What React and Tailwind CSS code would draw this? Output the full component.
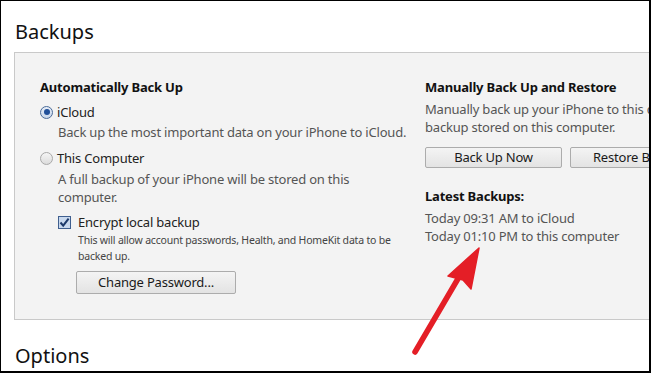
import React from "react";

const font = { fontFamily: '"Noto Sans", "Open Sans", sans-serif' };

function Radio({ checked }) {
  return (
    <span
      className={
        "inline-flex items-center justify-center w-[13px] h-[13px] rounded-full border shrink-0 " +
        (checked
          ? "border-[#4a6b99] bg-gradient-to-b from-[#e8eef7] to-[#c7d6ea]"
          : "border-[#a9a9a9] bg-gradient-to-b from-[#f5f5f5] to-[#dcdcdc]")
      }
    >
      {checked && <span className="w-[6px] h-[6px] rounded-full bg-[#1f4f99]" />}
    </span>
  );
}

function Checkbox() {
  return (
    <span className="inline-flex items-center justify-center w-[13px] h-[13px] border border-[#3f5f8f] bg-[#c9d9ee] shrink-0">
      <svg width="11" height="11" viewBox="0 0 11 11">
        <path d="M1.5 5.5 L4.2 8.6 L9.6 1.6" fill="none" stroke="#1d3a6b" strokeWidth="2" />
      </svg>
    </span>
  );
}

function Button({ children, className }) {
  return (
    <div
      className={
        "flex items-center justify-center border border-[#acacac] rounded-[2px] bg-gradient-to-b from-[#f4f4f4] to-[#e3e3e3] text-[13px] tracking-[-0.2px] text-[#1a1a1a] whitespace-nowrap " +
        className
      }
    >
      {children}
    </div>
  );
}

export default function App() {
  return (
    <div
      className="relative w-[651px] h-[373px] overflow-hidden bg-white border-l border-t border-r-2 border-b-2 border-black"
      style={font}
    >
      <div className="pl-[13px]">
        <h2 className="pt-[17px] text-[20px] leading-[28px] text-[#111] mb-[6px] pl-px">Backups</h2>

        <div className="w-[700px] h-[268px] border border-[#c9c9c9] bg-[#f3f3f3] pt-[25px] pl-[25px] grid grid-cols-[385px_1fr] tracking-[-0.2px]">
          {/* left column */}
          <div className="flex flex-col">
            <div className="text-[13px] leading-[18px] font-bold text-[#111]">Automatically Back Up</div>

            <div className="mt-[7px] flex items-center gap-[4px] text-[13px] leading-[18px] text-[#222]">
              <Radio checked />
              <span>iCloud</span>
            </div>
            <div className="mt-[2px] pl-[18px] text-[13px] leading-[18px] text-[#555] whitespace-nowrap">
              Back up the most important data on your iPhone to iCloud.
            </div>

            <div className="mt-[8px] flex items-center gap-[4px] text-[13px] leading-[18px] text-[#222]">
              <Radio />
              <span>This Computer</span>
            </div>
            <div className="mt-[3px] pl-[18px] text-[13px] leading-[18px] text-[#555] whitespace-nowrap">
              A full backup of your iPhone will be stored on this
              <br />
              computer.
            </div>

            <div className="mt-[7px] pl-[18px] flex items-center gap-[7px] text-[13px] leading-[18px] text-[#222]">
              <Checkbox />
              <span>Encrypt local backup</span>
            </div>
            <div className="mt-[1px] pl-[38px] text-[10.5px] leading-[16px] text-[#444] whitespace-nowrap">
              This will allow account passwords, Health, and HomeKit data to be
              <br />
              backed up.
            </div>

            <div className="mt-[7px] pl-[36px]">
              <Button className="w-[160px] h-[23px]">Change Password...</Button>
            </div>
          </div>

          {/* right column */}
          <div className="flex flex-col">
            <div className="text-[13px] leading-[18px] font-bold text-[#111]">Manually Back Up and Restore</div>
            <div className="mt-[4px] text-[13px] leading-[18px] text-[#555] whitespace-nowrap">
              Manually back up your iPhone to this computer or restore a
              <br />
              backup stored on this computer.
            </div>
            <div className="mt-[11px] flex gap-[8px]">
              <Button className="w-[137px] h-[21px]">Back Up Now</Button>
              <Button className="w-[148px] h-[21px]">Restore Backup...</Button>
            </div>
            <div className="mt-[19px] text-[13px] leading-[18px] font-bold text-[#111]">Latest Backups:</div>
            <div className="mt-[4px] text-[13px] leading-[18px] text-[#555] whitespace-nowrap">
              Today 09:31 AM to iCloud
              <br />
              Today 01:10 PM to this computer
            </div>
          </div>
        </div>

        <h2 className="mt-[22px] text-[20px] leading-[28px] text-[#111] pl-px">Options</h2>
      </div>

      {/* annotation arrow */}
      <svg className="absolute left-0 top-0" width="651" height="373" viewBox="0 0 651 373">
        <line x1="414" y1="351" x2="458" y2="276" stroke="#e41e26" strokeWidth="5.5" strokeLinecap="round" />
        <path d="M478 247 L447 275 L462 279 L470 288 Z" fill="#e41e26" stroke="#e41e26" strokeWidth="1.5" strokeLinejoin="round" />
      </svg>
    </div>
  );
}
